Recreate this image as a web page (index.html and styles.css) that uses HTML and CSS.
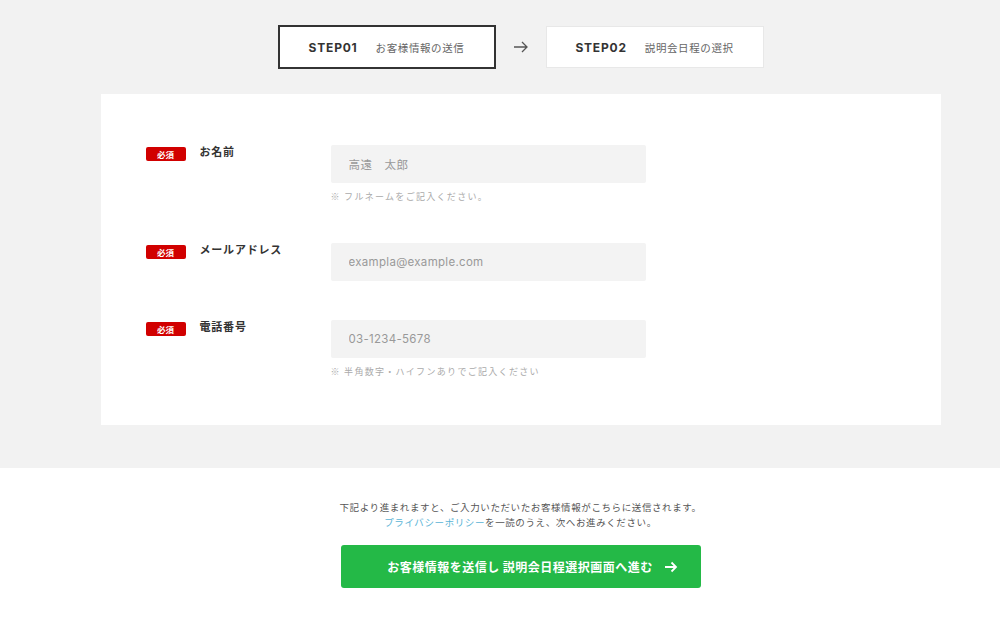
FILE: index.html
```html
<!DOCTYPE html>
<html lang="ja">
<head>
<meta charset="UTF-8" />
<meta name="viewport" content="width=device-width, initial-scale=1" />
<title>お客様情報の送信</title>
<link rel="stylesheet" href="styles.css">
</head>
<body>
  <div class="upper">
    <div class="inner">
      <div class="steps">
        <div class="step current"><span class="step-no">STEP01</span><span class="step-name">お客様情報の送信</span></div>
        <svg class="step-arrow" width="16" height="12" viewBox="0 0 16 12"><path d="M1 6h13M9 1l5 5-5 5" fill="none" stroke="#555" stroke-width="1.3"/></svg>
        <div class="step"><span class="step-no">STEP02</span><span class="step-name">説明会日程の選択</span></div>
      </div>

      <form class="card">
        <div class="row">
          <div class="label"><span class="badge">必須</span><span class="label-text">お名前</span></div>
          <div class="field">
            <input type="text" placeholder="高遠　太郎">
            <p class="note">※ フルネームをご記入ください。</p>
          </div>
        </div>
        <div class="row">
          <div class="label"><span class="badge">必須</span><span class="label-text">メールアドレス</span></div>
          <div class="field">
            <input type="email" class="latin" placeholder="exampla@example.com">
          </div>
        </div>
        <div class="row">
          <div class="label"><span class="badge">必須</span><span class="label-text">電話番号</span></div>
          <div class="field">
            <input type="tel" class="latin" placeholder="03-1234-5678">
            <p class="note">※ 半角数字・ハイフンありでご記入ください</p>
          </div>
        </div>
      </form>
    </div>
  </div>

  <div class="lower">
    <div class="inner">
      <p class="notice">下記より進まれますと、ご入力いただいたお客様情報がこちらに送信されます。<br><a href="#">プライバシーポリシー</a>を一読のうえ、次へお進みください。</p>
      <button class="submit" type="button">お客様情報を送信し 説明会日程選択画面へ進む
        <svg width="14" height="12" viewBox="0 0 14 12"><path d="M1 6h11M7.5 1.5 12 6l-4.5 4.5" fill="none" stroke="#fff" stroke-width="1.8"/></svg>
      </button>
    </div>
  </div>
</body>
</html>
```

FILE: styles.css
```css
body {
  margin: 0;
  font-family: "Noto Sans CJK JP", "Noto Sans", sans-serif;
  color: #333;
  background-color: #fff;
}
.inner {
  margin-left: 41px;
  display: flex;
  flex-direction: column;
  align-items: center;
}
.upper {
  background-color: #f2f2f2;
  padding: 25px 0 43px;
}
.steps {
  display: flex;
  align-items: center;
  gap: 17px;
  margin-bottom: 25px;
}
.step {
  width: 218px;
  height: 42px;
  box-sizing: border-box;
  background-color: #fff;
  border: 1px solid #e8e8e8;
  display: flex;
  justify-content: center;
  align-items: center;
  gap: 18px;
}
.step.current {
  height: 44px;
  border: 2px solid #333;
}
.step-no {
  font-family: Inter, "Noto Sans", sans-serif;
  font-weight: 700;
  font-size: 12px;
  letter-spacing: 0.8px;
  color: #333;
}
.step-name {
  font-size: 10.5px;
  color: #666;
  letter-spacing: 0.6px;
}
.card {
  width: 840px;
  box-sizing: border-box;
  background-color: #fff;
  padding: 51px 45px 46px;
  margin: 0;
}
.row {
  display: flex;
  margin-bottom: 39px;
}
.row:last-child {
  margin-bottom: 0;
}
.label {
  width: 185px;
  display: flex;
  align-items: flex-start;
  padding-top: 2px;
}
.badge {
  width: 40px;
  height: 14px;
  border-radius: 2px;
  background-color: #d10000;
  color: #fff;
  font-size: 8.5px;
  font-weight: 700;
  line-height: 14px;
  text-align: center;
  margin-right: 14px;
}
.label-text {
  font-size: 11px;
  font-weight: 700;
  line-height: 12px;
  letter-spacing: 0.8px;
  color: #333;
  margin-top: -2px;
}
.field input {
  display: block;
  width: 315px;
  height: 38px;
  box-sizing: border-box;
  border: none;
  border-radius: 2px;
  background-color: #f3f3f3;
  padding: 0 18px;
  font-family: "Noto Sans CJK JP", "Noto Sans", sans-serif;
  font-size: 11.5px;
  letter-spacing: 0.5px;
}
.field input.latin {
  font-family: Inter, "Noto Sans", sans-serif;
  font-size: 11.5px;
  letter-spacing: 0.3px;
}
.field input::placeholder {
  color: #999;
}
.note {
  margin: 7px 0 0;
  font-size: 9px;
  line-height: 14px;
  color: #aaa;
  letter-spacing: 1.3px;
}
.lower {
  padding: 32px 0 30px;
}
.notice {
  margin: 0 0 15px;
  font-size: 9.5px;
  line-height: 15px;
  color: #555;
  text-align: center;
  letter-spacing: 0.6px;
}
.notice a {
  color: #5ab4d6;
  text-decoration: none;
}
.submit {
  width: 360px;
  height: 43px;
  border: none;
  border-radius: 3px;
  background-color: #24b947;
  color: #fff;
  font-family: "Noto Sans CJK JP", "Noto Sans", sans-serif;
  font-size: 12px;
  font-weight: 700;
  letter-spacing: 0.5px;
  display: flex;
  justify-content: center;
  align-items: center;
  gap: 11px;
  padding-left: 30px;
  cursor: pointer;
}
```
